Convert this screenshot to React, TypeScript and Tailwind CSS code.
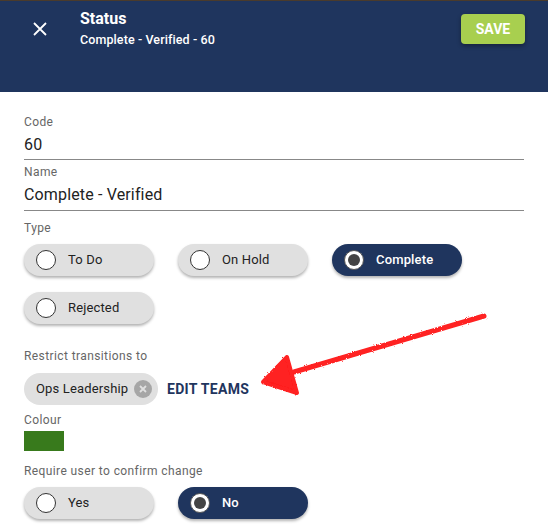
import React from "react";

function Radio({ selected }: { selected: boolean }) {
  return selected ? (
    <span className="flex h-5 w-5 items-center justify-center rounded-full border border-[#555] bg-white">
      <span className="h-3 w-3 rounded-full bg-[#444]" />
    </span>
  ) : (
    <span className="h-5 w-5 rounded-full border border-[#333] bg-white" />
  );
}

function Chip({ label, selected = false }: { label: string; selected?: boolean }) {
  return (
    <div
      className={
        "flex h-8 w-[130px] items-center gap-3 rounded-full pl-3 text-[13px] tracking-[0.15px] shadow-[0_2px_3px_rgba(0,0,0,0.3)] " +
        (selected ? "bg-[#1f355e] text-white font-medium" : "bg-[#e0e0e0] text-[#222]")
      }
    >
      <Radio selected={selected} />
      <span>{label}</span>
    </div>
  );
}

function Label({ children, className = "" }: { children: React.ReactNode; className?: string }) {
  return <div className={"h-4 text-[12px] leading-4 tracking-[0.4px] text-[#666] " + className}>{children}</div>;
}

export default function App() {
  return (
    <div
      className="relative h-[525px] w-[548px] overflow-hidden bg-white"
      style={{ fontFamily: "Roboto, 'Liberation Sans', sans-serif" }}
    >
      <div className="h-[92px] border-t border-[#4a3b2c] bg-[#1f355e]">
        <div className="flex items-start">
          <div className="ml-[33px] mt-[21px]">
            <svg width="14" height="14" viewBox="0 0 14 14">
              <path d="M1 1L13 13M13 1L1 13" stroke="white" strokeWidth="1.8" />
            </svg>
          </div>
          <div className="ml-[33px] mt-[8px] text-white">
            <div className="text-[16px] font-bold leading-5">Status</div>
            <div className="mt-[3px] text-[12.5px] font-medium leading-4 tracking-[0.1px]">Complete - Verified - 60</div>
          </div>
          <div className="ml-auto mr-[23px] mt-[13px] flex h-[30px] w-[64px] items-center justify-center rounded-[4px] bg-[#a8cf4f] text-[14px] font-bold text-white shadow-[0_2px_4px_rgba(0,0,0,0.35)]">
            SAVE
          </div>
        </div>
      </div>

      <div className="px-6 pt-[22px]">
        <Label>Code</Label>
        <div className="flex h-[30px] items-center border-b border-[#888] text-[16px] tracking-[0.15px] text-[#222]">60</div>
        <Label className="mt-[4px]">Name</Label>
        <div className="flex h-[31px] items-center border-b border-[#888] text-[16px] tracking-[0.15px] text-[#222]">Complete - Verified</div>

        <Label className="mt-[9px]">Type</Label>
        <div className="mt-2 flex w-[460px] flex-wrap gap-x-6 gap-y-4">
          <Chip label="To Do" />
          <Chip label="On Hold" />
          <Chip label="Complete" selected />
          <Chip label="Rejected" />
        </div>

        <Label className="mt-6">Restrict transitions to</Label>
        <div className="mt-[9px] flex items-center">
          <div className="flex h-8 w-[134px] items-center rounded-full bg-[#e0e0e0] pl-3 pr-[6px] text-[13px] tracking-[0.15px] text-[#222]">
            <span>Ops Leadership</span>
            <span className="ml-auto flex h-[18px] w-[18px] items-center justify-center rounded-full bg-[#a6a6a6]">
              <svg width="8" height="8" viewBox="0 0 8 8">
                <path d="M1 1L7 7M7 1L1 7" stroke="#e0e0e0" strokeWidth="1.8" />
              </svg>
            </span>
          </div>
          <span className="ml-[9px] text-[14px] font-bold tracking-[0.3px] text-[#1f355e]">EDIT TEAMS</span>
        </div>

        <Label className="mt-[7px]">Colour</Label>
        <div className="mt-[3px] h-5 w-10 bg-[#387a1c]" />

        <Label className="mt-3">Require user to confirm change</Label>
        <div className="mt-2 flex gap-x-6">
          <Chip label="Yes" />
          <Chip label="No" selected />
        </div>
      </div>

      <svg className="pointer-events-none absolute left-0 top-0" width="548" height="525">
        <defs>
          <filter id="rough">
            <feTurbulence type="fractalNoise" baseFrequency="0.9" numOctaves="2" result="n" />
            <feDisplacementMap in="SourceGraphic" in2="n" scale="2.5" />
          </filter>
        </defs>
        <g filter="url(#rough)" fill="#ff2020" stroke="#ff2020" strokeLinecap="round" strokeLinejoin="round">
          <path d="M484 316 L294 372" strokeWidth="5" fill="none" />
          <path d="M287 357 L263 382 L297 393 Z" strokeWidth="4" />
        </g>
      </svg>
    </div>
  );
}
